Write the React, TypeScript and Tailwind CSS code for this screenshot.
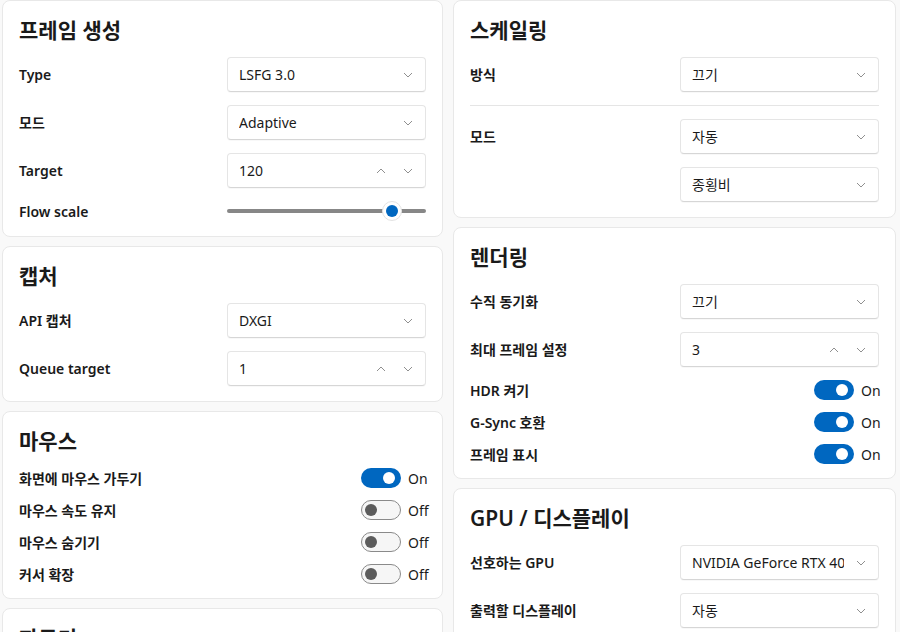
import React from 'react'

const font = { fontFamily: '"Noto Sans", "Noto Sans CJK KR", sans-serif' }

function ChevronDown() {
  return (
    <svg width="10" height="6" viewBox="0 0 10 6" fill="none">
      <polyline points="1,1 5,5 9,1" stroke="#8f8f8f" strokeWidth="1" />
    </svg>
  )
}

function ChevronUp() {
  return (
    <svg width="10" height="6" viewBox="0 0 10 6" fill="none">
      <polyline points="1,5 5,1 9,5" stroke="#8f8f8f" strokeWidth="1" />
    </svg>
  )
}

function Card({ title, children }: { title: string; children: React.ReactNode }) {
  return (
    <div className="rounded-lg border border-[#e8e8e8] bg-white px-4 pt-[15px] pb-[15px]">
      <div className="h-7 text-[21px] leading-7 font-semibold text-[#1a1a1a]">{title}</div>
      {children}
    </div>
  )
}

function Box({ value, number }: { value: string; number?: boolean }) {
  return (
    <div className="flex h-[35px] w-[199px] items-center justify-between rounded-[4px] border border-[#e5e5e5] border-b-[#d6d6d6] bg-white pl-[11px] pr-[12px] shadow-[0_1px_1px_rgba(0,0,0,0.03)]">
      <span className="overflow-hidden whitespace-nowrap text-[14px] text-[#1a1a1a]">{value}</span>
      {number ? (
        <div className="flex items-center gap-[17px]">
          <ChevronUp />
          <ChevronDown />
        </div>
      ) : (
        <div className="pl-3">
          <ChevronDown />
        </div>
      )}
    </div>
  )
}

function SelectRow({ label, value, number }: { label: string; value: string; number?: boolean }) {
  return (
    <div className="flex h-[35px] items-center justify-between">
      <span className="text-[14px] font-semibold text-[#1a1a1a]">{label}</span>
      <Box value={value} number={number} />
    </div>
  )
}

function Toggle({ label, on }: { label: string; on: boolean }) {
  return (
    <div className="flex h-8 items-center justify-between">
      <span className="text-[14px] font-semibold text-[#1a1a1a]">{label}</span>
      <div className="flex items-center">
        {on ? (
          <div className="flex h-5 w-10 items-center justify-end rounded-full bg-[#0067c0] pr-[6px]">
            <div className="h-3 w-3 rounded-full bg-white" />
          </div>
        ) : (
          <div className="flex h-5 w-10 items-center justify-start rounded-full border border-[#8a8a8a] bg-[#f6f6f6] pl-[3px]">
            <div className="h-3 w-3 rounded-full bg-[#5c5c5c]" />
          </div>
        )}
        <span className="ml-[7px] w-[18px] whitespace-nowrap text-[14px] text-[#1a1a1a]">{on ? 'On' : 'Off'}</span>
      </div>
    </div>
  )
}

function SliderRow({ label }: { label: string }) {
  return (
    <div className="flex h-5 items-center justify-between">
      <span className="text-[14px] font-semibold text-[#1a1a1a]">{label}</span>
      <div className="relative flex h-5 w-[199px] items-center">
        <div className="h-1 w-full rounded-full bg-[#878787]" />
        <div className="absolute left-[155px] top-0 flex h-5 w-5 items-center justify-center rounded-full border border-[#e3e3e3] bg-white">
          <div className="h-3 w-3 rounded-full bg-[#0067c0]" />
        </div>
      </div>
    </div>
  )
}

export default function App() {
  return (
    <div className="min-h-[632px] bg-[#f9f9f9] pl-[2px]" style={font}>
      <div className="grid grid-cols-[441px_443px] gap-[10px]">
        <div className="flex flex-col gap-[9px]">
          <Card title="프레임 생성">
            <div className="mt-[13px] flex flex-col gap-[13px]">
              <SelectRow label="Type" value="LSFG 3.0" />
              <SelectRow label="모드" value="Adaptive" />
              <SelectRow label="Target" value="120" number />
              <SliderRow label="Flow scale" />
            </div>
          </Card>
          <Card title="캡처">
            <div className="mt-[13px] flex flex-col gap-[13px]">
              <SelectRow label="API 캡처" value="DXGI" />
              <SelectRow label="Queue target" value="1" number />
            </div>
          </Card>
          <div className="-mb-[7px]">
            <Card title="마우스">
              <div className="mt-[7px] -mb-[7px] flex flex-col">
                <Toggle label="화면에 마우스 가두기" on />
                <Toggle label="마우스 속도 유지" on={false} />
                <Toggle label="마우스 숨기기" on={false} />
                <Toggle label="커서 확장" on={false} />
              </div>
            </Card>
          </div>
          <div className="mt-[7px]">
            <Card title="자르기">
              <div className="mt-[13px] flex flex-col gap-[13px]">
                <SelectRow label="모드" value="끄기" />
              </div>
            </Card>
          </div>
        </div>
        <div className="flex flex-col gap-[9px]">
          <Card title="스케일링">
            <div className="mt-[13px] flex flex-col">
              <SelectRow label="방식" value="끄기" />
              <div className="my-[13px] h-px bg-[#e5e5e5]" />
              <div className="flex justify-between">
                <div className="flex h-[35px] items-center">
                  <span className="text-[14px] font-semibold text-[#1a1a1a]">모드</span>
                </div>
                <div className="flex flex-col gap-[13px]">
                  <Box value="자동" />
                  <Box value="종횡비" />
                </div>
              </div>
            </div>
          </Card>
          <Card title="렌더링">
            <div className="mt-[13px] flex flex-col gap-[13px]">
              <SelectRow label="수직 동기화" value="끄기" />
              <SelectRow label="최대 프레임 설정" value="3" number />
            </div>
            <div className="mt-[7px] -mb-[7px] flex flex-col">
              <Toggle label="HDR 켜기" on />
              <Toggle label="G-Sync 호환" on />
              <Toggle label="프레임 표시" on />
            </div>
          </Card>
          <Card title="GPU / 디스플레이">
            <div className="mt-[13px] flex flex-col gap-[13px]">
              <SelectRow label="선호하는 GPU" value="NVIDIA GeForce RTX 4070" />
              <SelectRow label="출력할 디스플레이" value="자동" />
            </div>
          </Card>
        </div>
      </div>
    </div>
  )
}
